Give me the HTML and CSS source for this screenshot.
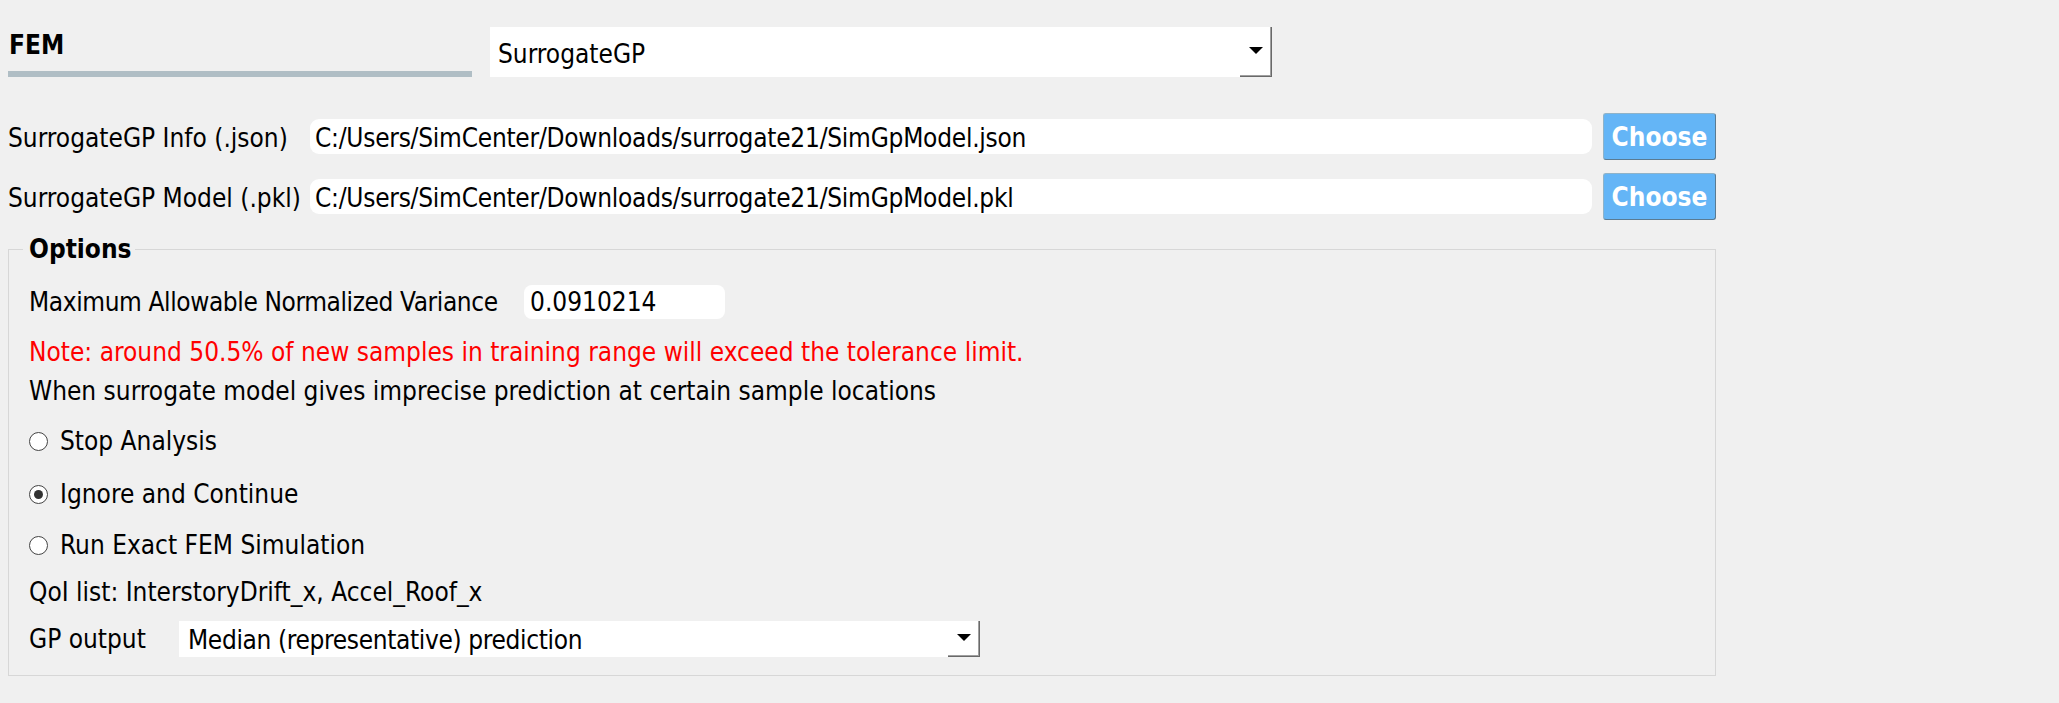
FILE: index.html
```html
<!DOCTYPE html>
<html>
<head>
<meta charset="utf-8">
<link rel="stylesheet" href="styles.css">
</head>
<body>
<div class="page">
  <div class="header">
    <div class="tab">
      <span class="tab-title">FEM</span>
      <div class="tab-bar"></div>
    </div>
    <div class="combo combo-main">
      <span class="combo-text">SurrogateGP</span>
      <span class="drop-btn"><span class="arrow"></span></span>
    </div>
  </div>

  <div class="file-grid">
    <span class="file-label">SurrogateGP Info (.json)</span>
    <div class="path-input">C:/Users/SimCenter/Downloads/surrogate21/SimGpModel.json</div>
    <button class="choose">Choose</button>
    <span class="file-label">SurrogateGP Model (.pkl)</span>
    <div class="path-input">C:/Users/SimCenter/Downloads/surrogate21/SimGpModel.pkl</div>
    <button class="choose">Choose</button>
  </div>

  <fieldset class="options">
    <legend class="options-title">Options</legend>
    <div class="max-row">
      <span class="max-label">Maximum Allowable Normalized Variance</span>
      <div class="max-input">0.0910214</div>
    </div>
    <div class="note">Note: around 50.5% of new samples in training range will exceed the tolerance limit.</div>
    <div class="when">When surrogate model gives imprecise prediction at certain sample locations</div>
    <div class="radio-row r-stop"><span class="radio"></span><span>Stop Analysis</span></div>
    <div class="radio-row r-ignore"><span class="radio checked"></span><span>Ignore and Continue</span></div>
    <div class="radio-row r-run"><span class="radio"></span><span>Run Exact FEM Simulation</span></div>
    <div class="qoi">QoI list: InterstoryDrift_x, Accel_Roof_x</div>
    <div class="gp-row">
      <span class="gp-label">GP output</span>
      <div class="combo combo-gp">
        <span class="combo-text">Median (representative) prediction</span>
        <span class="drop-btn"><span class="arrow"></span></span>
      </div>
    </div>
  </fieldset>
</div>
</body>
</html>
```

FILE: styles.css
```css
html, body {
  margin: 0;
  padding: 0;
  background: #f0f0f0;
}
body {
  font-family: "DejaVu Sans Condensed", "DejaVu Sans", sans-serif;
  font-size: 26px;
  line-height: 30px;
  color: #000;
}
.page {
  padding: 27px 0 0 8px;
  width: 1708px;
}
.header {
  display: flex;
  height: 50px;
  gap: 18px;
}
.tab {
  width: 464px;
  display: flex;
  flex-direction: column;
  justify-content: space-between;
}
.tab-title {
  font-weight: bold;
  margin-top: 3px;
  padding-left: 1px;
}
.tab-bar {
  height: 6px;
  background: #b0bec5;
}
.combo {
  background: #fff;
  display: flex;
  align-items: center;
  box-sizing: border-box;
}
.combo-main {
  width: 782px;
  height: 50px;
}
.combo-text {
  flex: 1;
  padding-left: 8px;
  padding-top: 3px;
  white-space: nowrap;
}
.drop-btn {
  width: 32px;
  align-self: stretch;
  display: flex;
  align-items: center;
  justify-content: center;
  box-shadow: inset -1px -1px 0 #696969, inset -2px -2px 0 #a0a0a0;
}
.arrow {
  width: 0;
  height: 0;
  border-left: 7px solid transparent;
  border-right: 7px solid transparent;
  border-top: 7px solid #000;
  margin-bottom: 4px;
}
.file-grid {
  display: grid;
  grid-template-columns: 291px 1282px 113px;
  grid-auto-rows: 47px;
  column-gap: 11px;
  row-gap: 13px;
  align-items: center;
  margin-top: 36px;
}
.file-label {
  white-space: nowrap;
  padding-top: 3px;
}
.path-input {
  height: 35px;
  background: #fff;
  border-radius: 9px;
  padding: 3px 0 0 5px;
  box-sizing: border-box;
  display: flex;
  align-items: center;
  white-space: nowrap;
  letter-spacing: -0.25px;
}
.choose {
  height: 47px;
  width: 113px;
  margin: 0;
  padding: 0;
  font-family: inherit;
  font-size: 26px;
  font-weight: bold;
  color: #fff;
  background: #64b5f6;
  border: 1px solid;
  border-color: #8fb3c9 #5a7b92 #5a7b92 #8fb3c9;
  border-radius: 3px;
}
.options {
  margin: 14px 0 0 0;
  padding: 21px 20px 18px 20px;
  border: 1px solid #d7d7d7;
  min-width: 0;
}
.options-title {
  font-weight: bold;
  margin-left: -6px;
  padding: 0 4px 0 6px;
  line-height: 30px;
}
.max-row {
  display: flex;
  align-items: center;
  height: 34px;
}
.max-label {
  width: 495px;
  white-space: nowrap;
  letter-spacing: -0.4px;
}
.max-input {
  width: 201px;
  height: 34px;
  box-sizing: border-box;
  background: #fff;
  border-radius: 8px;
  padding-left: 6px;
  display: flex;
  align-items: center;
}
.note {
  color: #ff0000;
  margin-top: 18px;
  white-space: nowrap;
}
.when {
  margin-top: 9px;
  white-space: nowrap;
}
.radio-row {
  display: flex;
  align-items: center;
  height: 30px;
}
.r-stop { margin-top: 20px; }
.r-ignore { margin-top: 23px; }
.r-run { margin-top: 21px; }
.radio {
  width: 19px;
  height: 19px;
  box-sizing: border-box;
  border: 1px solid #444;
  border-radius: 50%;
  background: #fff;
  margin-right: 12px;
  display: flex;
  align-items: center;
  justify-content: center;
}
.radio.checked::after {
  content: "";
  width: 9px;
  height: 9px;
  border-radius: 50%;
  background: #333;
}
.qoi {
  margin-top: 17px;
  white-space: nowrap;
}
.gp-row {
  display: flex;
  align-items: center;
  margin-top: 14px;
  height: 36px;
}
.gp-label {
  width: 150px;
  white-space: nowrap;
}
.combo-gp {
  width: 801px;
  height: 36px;
}
.combo-gp .combo-text {
  padding-left: 9px;
  padding-top: 2px;
  letter-spacing: -0.35px;
}
```
